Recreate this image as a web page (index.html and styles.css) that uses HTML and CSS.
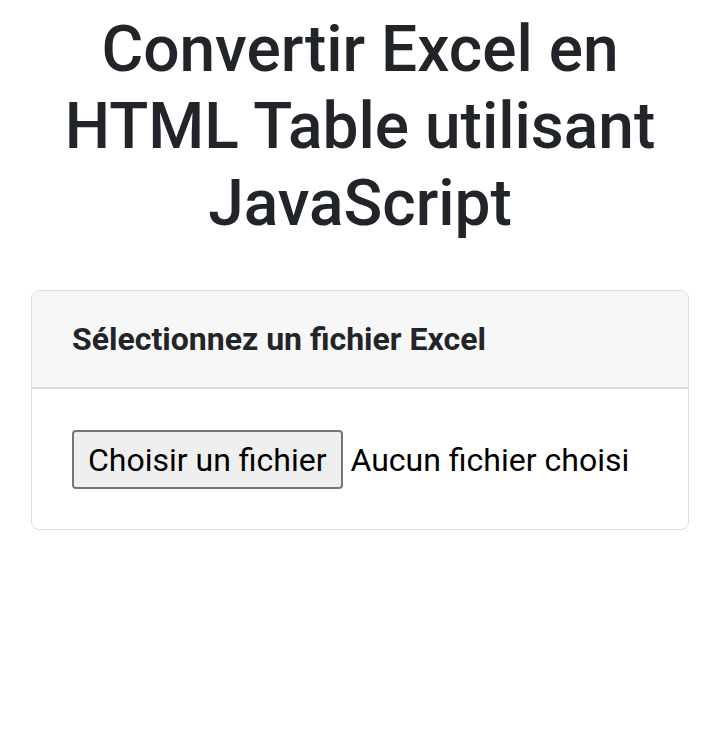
FILE: index.html
```html
<!DOCTYPE html>
<html lang="fr">
<head>
<meta charset="utf-8">
<title>Convertir Excel en HTML Table utilisant JavaScript</title>
<link rel="stylesheet" href="styles.css">
</head>
<body>
<div class="container">
  <h1 class="title">Convertir Excel en HTML Table utilisant JavaScript</h1>
  <div class="card">
    <div class="card-header">Sélectionnez un fichier Excel</div>
    <div class="card-body">
      <div class="file-input">
        <span class="file-btn">Choisir un fichier</span>
        <span class="file-name">Aucun fichier choisi</span>
      </div>
    </div>
  </div>
</div>
</body>
</html>
```
FILE: styles.css
```css
html, body {
  margin: 0;
  padding: 0;
  background: #fff;
}
body {
  font-family: Roboto, "Liberation Sans", sans-serif;
  color: #212529;
}
.container {
  padding: 12px 31px 0;
}
.title {
  margin: 0 0 48px;
  font-size: 64px;
  line-height: 1.2;
  font-weight: 500;
  text-align: center;
  color: #212529;
}
.card {
  border: 1px solid #dcdcdc;
  border-radius: 8px;
  overflow: hidden;
}
.card-header {
  background: #f7f7f7;
  border-bottom: 2px solid #dcdcdc;
  padding: 0 40px;
  height: 96px;
  display: flex;
  align-items: center;
  font-size: 32px;
  font-weight: 700;
  color: #212529;
}
.card-body {
  padding: 41px 40px 40px;
}
.file-input {
  display: flex;
  align-items: center;
  gap: 8px;
}
.file-btn {
  box-sizing: border-box;
  height: 59px;
  display: flex;
  align-items: center;
  padding: 0 14px;
  border: 2px solid #767676;
  border-radius: 4px;
  background: #efefef;
  font-size: 32px;
  color: #000;
}
.file-name {
  font-size: 32px;
  color: #000;
}
```
